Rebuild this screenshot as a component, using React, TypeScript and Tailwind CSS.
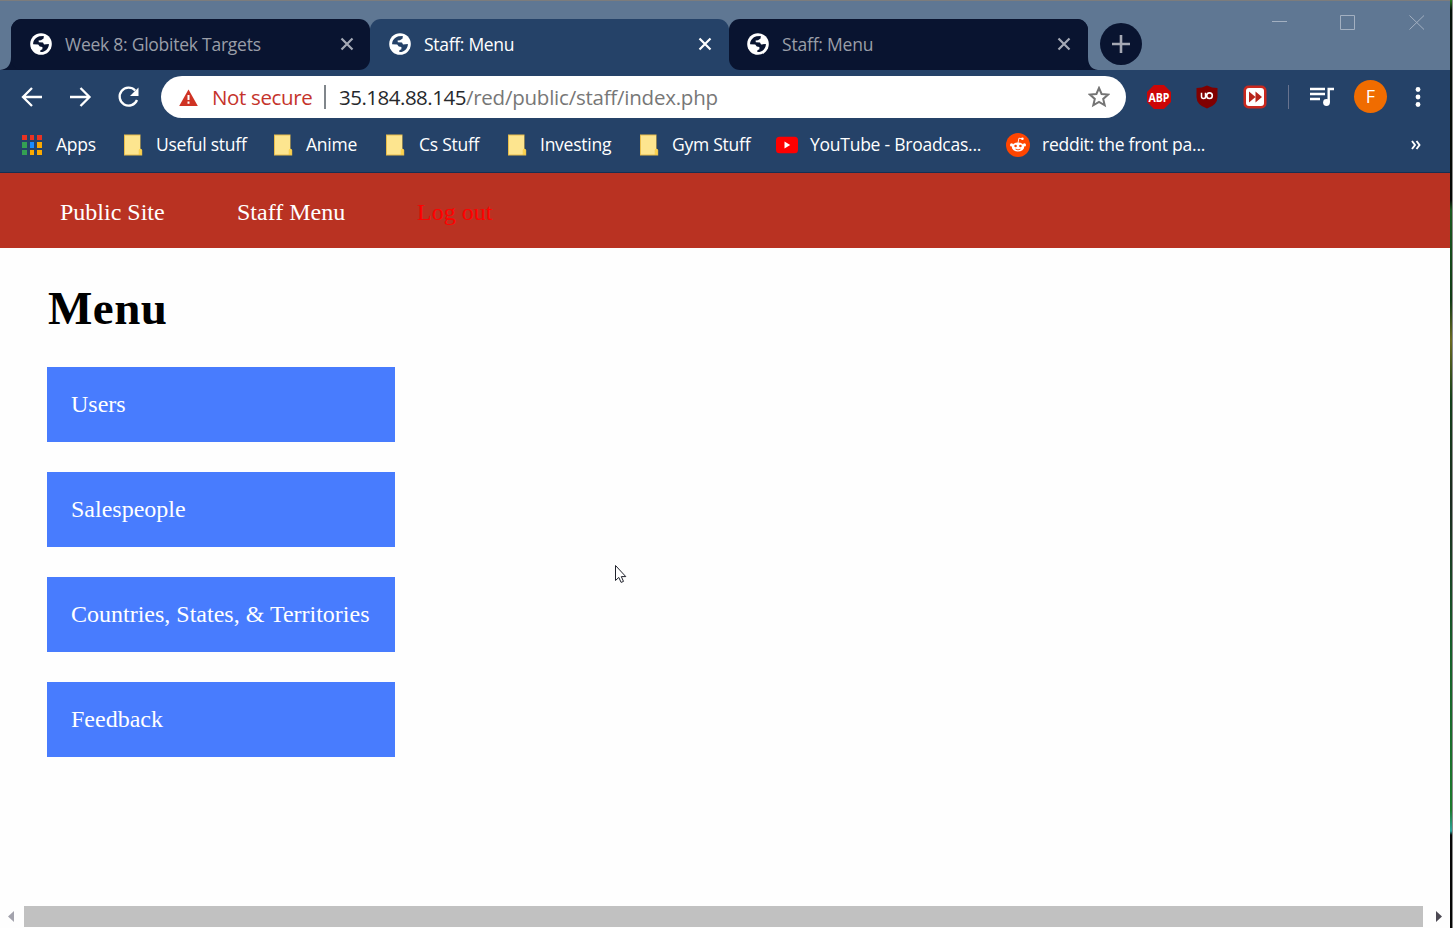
import React from "react";

const ui = "font-['Open_Sans','Noto_Sans',sans-serif]";

function Globe({ dark }: { dark: string }) {
  return (
    <svg width="22" height="22" viewBox="0 0 22 22" className="shrink-0">
      <circle cx="11" cy="11" r="10.8" fill="#fff" />
      <path
        fill={dark}
        d="M9.5 3.2 L13.8 3 L13.6 5.4 L11 7.2 L8.6 7.4 L8.8 9.3 L13 9.5 L14 11.4 L18.9 11 C19 14.5 16.5 18 12.5 19 L10.3 18.9 L10.4 17.3 L12.4 16.2 L12.4 14 L9.8 13.6 L8.2 11.5 L3.1 11.2 C3 7.5 5.8 4.2 9.5 3.2Z"
      />
    </svg>
  );
}

function Close({ color }: { color: string }) {
  return (
    <svg width="14" height="14" viewBox="0 0 14 14" className="shrink-0">
      <path d="M1.5 1.5 12.5 12.5M12.5 1.5 1.5 12.5" stroke={color} strokeWidth="2.2" />
    </svg>
  );
}

function Folder() {
  return (
    <svg width="19" height="22" viewBox="0 0 19 22" className="shrink-0">
      <path d="M0 .5h16.5v14L18.2 16v5.5H0z" fill="#e9bd4a" />
      <path d="M1 1.5h15v13.5l-1.2 1V20.5H1z" fill="#fde58f" />
      <path d="M15 15h2.5v5.5H15z" fill="#fbd34f" />
    </svg>
  );
}

function AppsGrid() {
  const colors = ["#ea3323", "#ea3323", "#ea3323", "#34a053", "#1a8cff", "#fba900", "#34a053", "#fba900", "#fba900"];
  return (
    <span className="grid w-[20px] grid-cols-3 gap-x-[3px] gap-y-[2px]">
      {colors.map((c, i) => (
        <i key={i} className="h-[5.5px] w-[4.7px]" style={{ backgroundColor: c }} />
      ))}
    </span>
  );
}

function YouTube() {
  return (
    <svg width="22" height="18" viewBox="0 0 22 18">
      <rect y=".8" width="22" height="16.4" rx="3.5" fill="#f00" />
      <path d="M8.5 5.6v6.8L14.2 9z" fill="#fff" />
    </svg>
  );
}

function Reddit() {
  return (
    <svg width="24" height="24" viewBox="0 0 24 24">
      <circle cx="12" cy="12" r="12" fill="#ff4500" />
      <ellipse cx="12" cy="14" rx="6.2" ry="4.6" fill="#fff" />
      <circle cx="5.6" cy="11.9" r="1.6" fill="#fff" />
      <circle cx="18.4" cy="11.9" r="1.6" fill="#fff" />
      <circle cx="16.4" cy="5.8" r="1.3" fill="#fff" />
      <path d="M12 10 12.9 5.2 16.4 5.8" stroke="#fff" strokeWidth=".9" fill="none" />
      <circle cx="9.6" cy="13" r="1.3" fill="#ff4500" />
      <circle cx="14.4" cy="13" r="1.3" fill="#ff4500" />
      <path d="M9.5 16.1q2.5 1.6 5 0" stroke="#ff4500" strokeWidth=".9" fill="none" />
    </svg>
  );
}

function Tab({ title, active, inset, tracking }: { title: string; active?: boolean; inset: string; tracking: string }) {
  return (
    <div
      className={`flex h-[51px] w-[359px] shrink-0 items-center rounded-[11px] pb-px ${inset} ${
        active ? "rounded-b-none bg-[#254268] text-white" : "bg-[#091430] text-[#9a9ea8]"
      }`}
    >
      <Globe dark={active ? "#254268" : "#091430"} />
      <span className={`ml-[13px] flex-1 whitespace-nowrap pb-px text-[17.5px] leading-6 ${tracking}`}>{title}</span>
      <Close color={active ? "#fff" : "#a5a9b5"} />
    </div>
  );
}

function TabStrip() {
  return (
    <header className="flex h-[70px] border-t border-[#7c7c7c] bg-[#5f7793] pt-[18px]">
      <svg width="11" height="51" viewBox="0 0 11 51" className="shrink-0">
        <path d="M0 51Q11 50 11 38V51z" fill="#091430" />
      </svg>
      <div className="flex w-[1077px] shrink-0 bg-[linear-gradient(#5f7793_50%,#254268_50%)]">
        <div className="flex w-[359px] rounded-tl-[11px] bg-[linear-gradient(90deg,#091430_50%,transparent_50%)]">
          <Tab title="Week 8: Globitek Targets" inset="pl-[19px] pr-[16px]" tracking="tracking-[-0.25px]" />
        </div>
        <Tab title="Staff: Menu" active inset="pl-[19px] pr-[17px]" tracking="tracking-[-0.3px]" />
        <div className="flex w-[359px] rounded-tr-[11px] bg-[linear-gradient(90deg,transparent_50%,#091430_50%)]">
          <Tab title="Staff: Menu" inset="pl-[18px] pr-[17px]" tracking="tracking-[-0.2px]" />
        </div>
      </div>
      <svg width="12" height="51" viewBox="0 0 12 51" className="shrink-0">
        <path d="M0 38Q0 50 10 51H0z" fill="#091430" />
      </svg>
      <div className="mt-[4px] flex size-[42px] shrink-0 items-center justify-center rounded-full bg-[#091430]">
        <svg width="18" height="18" viewBox="0 0 18 18">
          <path d="M9 0v18M0 9h18" stroke="#a5a8b3" strokeWidth="2.6" />
        </svg>
      </div>
      <svg
        width="154"
        height="18"
        viewBox="0 0 154 18"
        className="ml-[130px] mt-[-6px] shrink-0"
        fill="none"
        stroke="#a3b0c1"
      >
        <path d="M0 8.5H15M68.5 2.5h14v14h-14zM137.5 2.5l14.5 14M152 2.5l-14.5 14" />
      </svg>
    </header>
  );
}

function Toolbar() {
  return (
    <div className="flex h-[54px] items-center bg-[#254268] pl-[21px]">
      <svg
        width="122"
        height="24"
        viewBox="0 0 122 24"
        className="mb-px shrink-0"
        fill="none"
        stroke="#fff"
        strokeWidth="2.3"
      >
        <path d="M21 12H2.5M11 3 2 12l9 9M49 12h19.5M59.500 3l9 9-9 9" />
        <path d="M114.2 5.5A9 9 0 1 0 116 15" />
        <path d="M117.5 2.5v8.500h-8.500z" fill="#fff" stroke="none" />
      </svg>
      <div className="ml-[18px] flex h-[42px] w-[965px] shrink-0 items-center rounded-full bg-white pl-[18px] pr-[16px] text-[20.5px]">
        <svg width="19" height="17" viewBox="0 0 19 17" className="shrink-0">
          <path d="M9.5 0.500 18.800 17H.2z" fill="#cf3324" />
          <path d="M9.5 6v5M9.5 12.5v2.200" stroke="#fff" strokeWidth="2" />
        </svg>
        <span className="ml-[14px] w-[112px] whitespace-nowrap tracking-[-0.35px] text-[#c5332b]">Not secure</span>
        <i className="h-[24px] w-[2px] bg-[#80868b]" />
        <span className="ml-[13px] flex-1 whitespace-nowrap tracking-[-0.23px] text-[#777]">
          <span className="tracking-[-0.5px] text-[#26282c]">35.184.88.145</span>/red/public/staff/index.php
        </span>
        <svg width="22" height="22" viewBox="0 0 22 22" className="shrink-0">
          <path
            d="m11 2 2.6 6 6.6.6-5 4.3 1.5 6.4L11 15.900 5.300 19.300l1.500-6.400-5-4.300 6.600-.6z"
            fill="none"
            stroke="#747474"
            strokeWidth="2"
          />
        </svg>
      </div>
      <svg width="26" height="26" viewBox="0 0 26 26" className="ml-[20px] shrink-0">
        <path d="M8 1h10l7 7v10l-7 7H8l-7-7V8z" fill="#cc0606" />
        <text
          x="13"
          y="17.5"
          textAnchor="middle"
          textLength="21"
          fontFamily="Open Sans"
          fontWeight="700"
          fontSize="12.5"
          lengthAdjust="spacingAndGlyphs"
          fill="#fff"
        >
          ABP
        </text>
      </svg>
      <svg width="22" height="24" viewBox="0 0 22 24" className="ml-[24px] shrink-0">
        <path d="M11 .5Q16 3 21.500 3v9q0 8-10.500 11.500Q.5 20 .5 12V3Q6 3 11 .5z" fill="#800000" />
        <path d="M5.500 7.800v3.700q0 2 2 2t2-1.500V7.800" fill="none" stroke="#fff" strokeWidth="1.500" />
        <circle cx="13.500" cy="10.700" r="2.800" fill="none" stroke="#fff" strokeWidth="1.600" />
      </svg>
      <svg width="24" height="24" viewBox="0 0 24 24" className="ml-[25px] shrink-0">
        <rect x=".5" y=".5" width="23" height="23" rx="5" fill="#c9281e" />
        <rect x="3" y="3" width="18" height="18" rx="3" fill="#fff" />
        <path d="M6 6.500 12.500 12 6 17.500zM12.500 6.500 19 12l-6.500 5.500z" fill="#b8241a" />
      </svg>
      <i className="ml-[21px] h-[24px] w-px bg-[#68738f]" />
      <svg
        width="25"
        height="20"
        viewBox="0 0 25 20"
        className="mb-px ml-[21px] shrink-0"
        fill="none"
        stroke="#fff"
        strokeWidth="2.4"
      >
        <path d="M0 2h15M0 7h15M0 12h10M18.700 15.500V2H24" />
        <circle cx="16.500" cy="15.500" r="3.400" fill="#fff" stroke="none" />
      </svg>
      <div className="mb-px ml-[19px] flex size-[33px] items-center justify-center rounded-full bg-[#f06c00] text-[18px] text-white">
        F
      </div>
      <svg width="6" height="20" viewBox="0 0 6 20" className="mb-px ml-[28px] shrink-0" fill="#fff">
        <circle cx="3" cy="2.5" r="2.4" />
        <circle cx="3" cy="10" r="2.4" />
        <circle cx="3" cy="17.5" r="2.4" />
      </svg>
    </div>
  );
}

const bookmarks = [
  { label: "Apps", icon: <AppsGrid />, box: "w-[102px]", slot: "w-[34px]" },
  { label: "Useful stuff", icon: <Folder />, box: "w-[150px]", slot: "w-[32px]" },
  { label: "Anime", icon: <Folder />, box: "w-[112px]", slot: "w-[32px]" },
  { label: "Cs Stuff", icon: <Folder />, box: "w-[122px]", slot: "w-[33px]" },
  { label: "Investing", icon: <Folder />, box: "w-[132px]", slot: "w-[32px]" },
  { label: "Gym Stuff", icon: <Folder />, box: "w-[136px]", slot: "w-[32px]" },
  { label: "YouTube - Broadcas...", icon: <YouTube />, box: "w-[230px]", slot: "w-[34px]" },
  { label: "reddit: the front pa...", icon: <Reddit />, box: "w-[404px]", slot: "w-[36px]" },
];

function Bookmarks() {
  return (
    <nav className="flex h-[49px] items-start border-b border-[#172f52] bg-[#254268] pl-[22px] text-[17.5px] text-white">
      {bookmarks.map((b) => (
        <div key={b.label} className={`flex h-[42px] shrink-0 items-center ${b.box}`}>
          <span className={`flex shrink-0 ${b.slot}`}>{b.icon}</span>
          <span className="whitespace-nowrap pb-[2px] tracking-[-0.25px]">{b.label}</span>
        </div>
      ))}
      <svg width="11" height="10" viewBox="0 0 11 10" className="mt-[16px] shrink-0">
        <path d="m2 1 3 4-3 4M6.500 1l3 4-3 4" fill="none" stroke="#fff" strokeWidth="1.9" />
      </svg>
    </nav>
  );
}

export default function App() {
  return (
    <div className={`relative flex h-[928px] w-[1453px] overflow-hidden bg-[#fefefe] ${ui}`}>
      <div className="flex w-[1450px] shrink-0 flex-col">
        <TabStrip />
        <Toolbar />
        <Bookmarks />
        <div className="flex flex-1 flex-col font-['Liberation_Serif',serif] text-[24px]">
          <nav className="flex h-[75px] items-center bg-[#b93222] pl-[60px] pt-[3px] text-white">
            <a className="w-[177px]">Public Site</a>
            <a className="w-[180px]">Staff Menu</a>
            <a className="text-[#ff0000]">Log out</a>
          </nav>
          <main className="flex-1 pl-[47px]">
            <h1 className="mt-[33px] h-[86px] pl-px text-[47px] font-bold leading-[55px] tracking-[0.5px]">Menu</h1>
            <ul className="flex w-[348px] flex-col gap-[30px] text-white">
              {["Users", "Salespeople", "Countries, States, & Territories", "Feedback"].map((t) => (
                <li key={t} className="flex h-[75px] items-center whitespace-nowrap bg-[#487cfe] pb-[2px] pl-[24px]">
                  {t}
                </li>
              ))}
            </ul>
          </main>
          <div className="flex h-[22px] items-start">
            <svg width="24" height="21" viewBox="0 0 24 21">
              <path d="M14 5v11L8 10.500z" fill="#a3a3ad" />
            </svg>
            <div className="h-[21px] w-[1399px] bg-[#c1c1c1]" />
            <svg width="27" height="21" viewBox="0 0 27 21">
              <path d="M13 5v11l6-5.500z" fill="#4c4953" />
            </svg>
          </div>
        </div>
      </div>
      <div className="w-[2px] bg-[linear-gradient(#2b7a22_0,#06130a_10px,#050805_200px,#1b5a1f_210px,#123b16_300px,#6b6a20_340px,#14401b_400px,#1d2b20_500px,#17602a_650px,#1d7a2c_810px,#2aa39a_831px,#080808_835px)]" />
      <div className="w-px bg-[#8a8a8a]" />
      <svg width="14" height="19" viewBox="0 0 14 19" className="absolute left-[614px] top-[564px]">
        <path
          d="M1.500 1.500v15l3.300-3.100 2.300 5 2.400-1-2.200-4.800h4.500z"
          fill="#fff"
          stroke="#20222c"
          strokeWidth="1"
        />
      </svg>
    </div>
  );
}
